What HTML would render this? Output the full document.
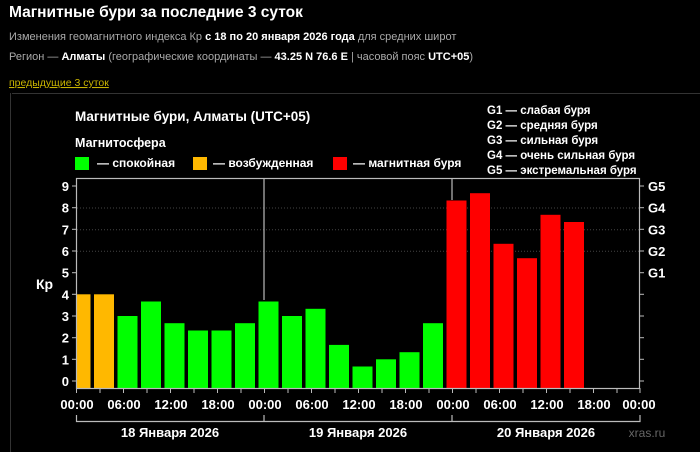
<!DOCTYPE html>
<html><head><meta charset="utf-8"><style>
html,body{margin:0;padding:0;background:#000;width:700px;height:452px;overflow:hidden}
svg{display:block}
text{font-family:"Liberation Sans",Arial,sans-serif}
</style></head><body>
<svg width="700" height="452" viewBox="0 0 700 452" xmlns="http://www.w3.org/2000/svg">
<rect width="700" height="452" fill="#000"/>
<text x="9" y="17" fill="#fff" font-size="15.5" font-weight="bold">Магнитные бури за последние 3 суток</text>
<text x="9" y="40" fill="#aaa" font-size="11">Изменения геомагнитного индекса Кр <tspan fill="#fff" font-weight="bold">с 18 по 20 января 2026 года</tspan> для средних широт</text>
<text x="9" y="60" fill="#aaa" font-size="11">Регион — <tspan fill="#fff" font-weight="bold">Алматы</tspan> (географические координаты — <tspan fill="#fff" font-weight="bold">43.25 N 76.6 E</tspan> | часовой пояс <tspan fill="#fff" font-weight="bold">UTC+05</tspan>)</text>
<text x="9" y="86" fill="#c9b400" font-size="10.5" text-decoration="underline">предыдущие 3 суток</text>
<line x1="12" y1="93.5" x2="700" y2="93.5" stroke="#333"/>
<line x1="10.5" y1="93" x2="10.5" y2="452" stroke="#333"/>
<text x="75" y="121" fill="#fff" font-size="13.5" font-weight="bold">Магнитные бури, Алматы (UTC+05)</text>
<g fill="#fff" font-size="11.5" font-weight="bold">
<text x="487" y="114">G1 — слабая буря</text>
<text x="487" y="129">G2 — средняя буря</text>
<text x="487" y="144">G3 — сильная буря</text>
<text x="487" y="159">G4 — очень сильная буря</text>
<text x="487" y="174">G5 — экстремальная буря</text>
</g>
<text x="75" y="147" fill="#fff" font-size="12.5" font-weight="bold">Магнитосфера</text>
<rect x="75" y="157" width="14" height="13" fill="#0f0"/>
<text x="97" y="167" fill="#fff" font-size="12" font-weight="bold">— спокойная</text>
<rect x="193" y="157" width="14" height="13" fill="#ffb800"/>
<text x="213" y="167" fill="#fff" font-size="12" font-weight="bold">— возбужденная</text>
<rect x="333" y="157" width="14" height="13" fill="#f00"/>
<text x="353" y="167" fill="#fff" font-size="12" font-weight="bold">— магнитная буря</text>
<!-- grid -->
<g stroke="#444" stroke-dasharray="1,2">
<line x1="77" y1="208" x2="639" y2="208"/>
<line x1="77" y1="229.7" x2="639" y2="229.7"/>
<line x1="77" y1="251.3" x2="639" y2="251.3"/>
</g>
<!-- bars: left=70.5+23.5i, zero=381, 21.67/unit -->
<g>
<rect x="77" y="294.3" width="13.5" height="93.7" fill="#ffb800"/>
<rect x="94" y="294.3" width="20" height="93.7" fill="#ffb800"/>
<rect x="117.5" y="316" width="20" height="72" fill="#0f0"/>
<rect x="141" y="301.5" width="20" height="86.5" fill="#0f0"/>
<rect x="164.5" y="323.2" width="20" height="64.8" fill="#0f0"/>
<rect x="188" y="330.5" width="20" height="57.5" fill="#0f0"/>
<rect x="211.5" y="330.5" width="20" height="57.5" fill="#0f0"/>
<rect x="235" y="323.2" width="20" height="64.8" fill="#0f0"/>
<rect x="258.5" y="301.5" width="20" height="86.5" fill="#0f0"/>
<rect x="282" y="316" width="20" height="72" fill="#0f0"/>
<rect x="305.5" y="308.8" width="20" height="79.2" fill="#0f0"/>
<rect x="329" y="344.9" width="20" height="43.1" fill="#0f0"/>
<rect x="352.5" y="366.5" width="20" height="21.5" fill="#0f0"/>
<rect x="376" y="359.3" width="20" height="28.7" fill="#0f0"/>
<rect x="399.5" y="352.2" width="20" height="35.8" fill="#0f0"/>
<rect x="423" y="323.2" width="20" height="64.8" fill="#0f0"/>
<rect x="446.5" y="200.5" width="20" height="187.5" fill="#f00"/>
<rect x="470" y="193.2" width="20" height="194.8" fill="#f00"/>
<rect x="493.5" y="243.8" width="20" height="144.2" fill="#f00"/>
<rect x="517" y="258.2" width="20" height="129.8" fill="#f00"/>
<rect x="540.5" y="214.8" width="20" height="173.2" fill="#f00"/>
<rect x="564" y="222" width="20" height="166" fill="#f00"/>
</g>
<!-- frame -->
<g stroke="#bbb" fill="none" stroke-width="1.2">
<rect x="76.5" y="178.5" width="563" height="210"/>
<line x1="264" y1="178" x2="264" y2="300"/>
<line x1="452" y1="178" x2="452" y2="200"/>
</g>
<!-- left ticks & labels -->
<g stroke="#bbb">
<line x1="72" y1="186" x2="76" y2="186"/><line x1="72" y1="207.7" x2="76" y2="207.7"/><line x1="72" y1="229.3" x2="76" y2="229.3"/><line x1="72" y1="251" x2="76" y2="251"/><line x1="72" y1="272.7" x2="76" y2="272.7"/><line x1="72" y1="294.3" x2="76" y2="294.3"/><line x1="72" y1="316" x2="76" y2="316"/><line x1="72" y1="337.7" x2="76" y2="337.7"/><line x1="72" y1="359.3" x2="76" y2="359.3"/><line x1="72" y1="381" x2="76" y2="381"/>
<line x1="640" y1="186" x2="644" y2="186"/><line x1="640" y1="207.7" x2="644" y2="207.7"/><line x1="640" y1="229.3" x2="644" y2="229.3"/><line x1="640" y1="251" x2="644" y2="251"/><line x1="640" y1="272.7" x2="644" y2="272.7"/><line x1="640" y1="294.3" x2="644" y2="294.3"/><line x1="640" y1="316" x2="644" y2="316"/><line x1="640" y1="337.7" x2="644" y2="337.7"/><line x1="640" y1="359.3" x2="644" y2="359.3"/><line x1="640" y1="381" x2="644" y2="381"/>
</g>
<g fill="#fff" font-size="13" font-weight="bold" text-anchor="end">
<text x="69" y="191">9</text><text x="69" y="212.7">8</text><text x="69" y="234.3">7</text><text x="69" y="256">6</text><text x="69" y="277.7">5</text><text x="69" y="299.3">4</text><text x="69" y="321">3</text><text x="69" y="342.7">2</text><text x="69" y="364.3">1</text><text x="69" y="386">0</text>
</g>
<text x="36" y="289" fill="#fff" font-size="14" font-weight="bold">Кр</text>
<g fill="#fff" font-size="13" font-weight="bold">
<text x="648" y="191">G5</text><text x="648" y="212.7">G4</text><text x="648" y="234.3">G3</text><text x="648" y="256">G2</text><text x="648" y="277.7">G1</text>
</g>
<!-- bottom ticks -->
<g stroke="#bbb">
<line x1="76.5" y1="388" x2="76.5" y2="393"/><line x1="100" y1="388" x2="100" y2="393"/><line x1="123.5" y1="388" x2="123.5" y2="393"/><line x1="147" y1="388" x2="147" y2="393"/><line x1="170.5" y1="388" x2="170.5" y2="393"/><line x1="194" y1="388" x2="194" y2="393"/><line x1="217.5" y1="388" x2="217.5" y2="393"/><line x1="241" y1="388" x2="241" y2="393"/><line x1="264.5" y1="388" x2="264.5" y2="393"/><line x1="288" y1="388" x2="288" y2="393"/><line x1="311.5" y1="388" x2="311.5" y2="393"/><line x1="335" y1="388" x2="335" y2="393"/><line x1="358.5" y1="388" x2="358.5" y2="393"/><line x1="382" y1="388" x2="382" y2="393"/><line x1="405.5" y1="388" x2="405.5" y2="393"/><line x1="429" y1="388" x2="429" y2="393"/><line x1="452.5" y1="388" x2="452.5" y2="393"/><line x1="476" y1="388" x2="476" y2="393"/><line x1="499.5" y1="388" x2="499.5" y2="393"/><line x1="523" y1="388" x2="523" y2="393"/><line x1="546.5" y1="388" x2="546.5" y2="393"/><line x1="570" y1="388" x2="570" y2="393"/><line x1="593.5" y1="388" x2="593.5" y2="393"/><line x1="617" y1="388" x2="617" y2="393"/><line x1="640" y1="388" x2="640" y2="393"/>
</g>
<g fill="#fff" font-size="13" font-weight="bold" text-anchor="middle">
<text x="77" y="409">00:00</text><text x="124" y="409">06:00</text><text x="171" y="409">12:00</text><text x="218" y="409">18:00</text><text x="265" y="409">00:00</text><text x="312" y="409">06:00</text><text x="359" y="409">12:00</text><text x="406" y="409">18:00</text><text x="453" y="409">00:00</text><text x="500" y="409">06:00</text><text x="547" y="409">12:00</text><text x="594" y="409">18:00</text><text x="639" y="409">00:00</text>
</g>
<g stroke="#bbb" fill="none" stroke-width="1.2">
<path d="M76.5 415V421.5H640V415M264 415V421.5M452 415V421.5"/>
</g>
<g fill="#fff" font-size="13" font-weight="bold" text-anchor="middle">
<text x="170" y="437">18 Января 2026</text><text x="358" y="437">19 Января 2026</text><text x="546" y="437">20 Января 2026</text>
</g>
<text x="647" y="437" fill="#666" font-size="12" text-anchor="middle">xras.ru</text>
</svg>
</body></html>
